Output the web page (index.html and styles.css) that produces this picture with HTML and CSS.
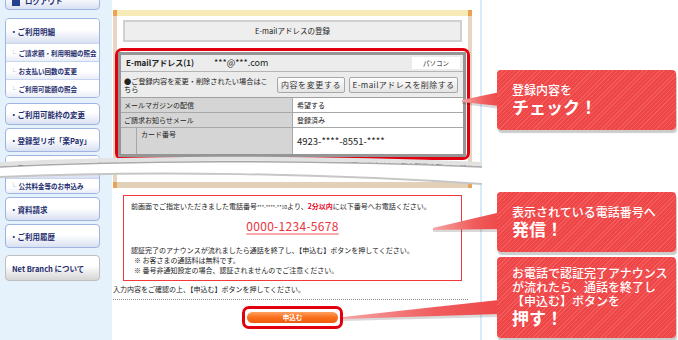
FILE: index.html
```html
<!DOCTYPE html>
<html lang="ja">
<head>
  <meta charset="UTF-8">
  <title>E-mailアドレスの登録</title>
  <link rel="stylesheet" href="styles.css">
</head>
<body>
  <div class="side">
    <div class="card card-top"><span class="sq"></span>ログアウト</div>
    <div class="card card-group first">
      <div class="card-head">・ご利用明細</div>
      <div class="sub"><span class="el">└</span>ご請求額・利用明細の照会</div>
      <div class="sub"><span class="el">└</span>お支払い回数の変更</div>
      <div class="sub"><span class="el">└</span>ご利用可能額の照会</div>
    </div>
    <div class="card card-short">・ご利用可能枠の変更</div>
    <div class="card">・登録型リボ「楽Pay」</div>
    <div class="card card-group">
      <div class="card-head low">・ネットキャッシング</div>
      <div class="sub low"><span class="el">└</span>公共料金等のお申込み</div>
    </div>
    <div class="card">・資料請求</div>
    <div class="card">・ご利用履歴</div>
    <div class="card card-gray">Net Branch について</div>
  </div>

  <div class="main">
    <div class="frame">
      <div class="frame-edge"></div>
      <div class="frame-body">
        <div class="title">E-mailアドレスの登録</div>
        <div class="mark">
          <div class="reg">
            <div class="r1">
              <b>E-mailアドレス(1)</b>
              <span class="addr">***@***.com</span>
              <span class="tag">パソコン</span>
            </div>
            <div class="r2">
              <p class="note">●ご登録内容を変更・削除されたい場合はこちら</p>
              <button class="btn">内容を変更する</button>
              <button class="btn wide">E-mailアドレスを削除する</button>
            </div>
            <div class="r3">
              <div class="lab">メールマガジンの配信</div>
              <div class="val">希望する</div>
            </div>
            <div class="r3">
              <div class="lab">ご請求お知らせメール</div>
              <div class="val">登録済み</div>
            </div>
            <div class="r5">
              <div class="ind"></div>
              <div class="lab2">カード番号</div>
              <div class="val card-no">4923-****-8551-****</div>
            </div>
          </div>
        </div>
        <p class="cut">※ご請求お知らせメールの送信先のため、※ご登録のE-mailアドレスは削除できません。お手数ですが、「ご請求お知らせメール」の設定を変更してください。</p>
      </div>
      <div class="frame-edge bottom"></div>
    </div>

    <div class="call">
      <p>前画面でご指定いただきました電話番号<span class="mask">***-****-**10</span>より、<span class="hot">2分以内</span>に以下番号へお電話ください。</p>
      <div class="tel">0000-1234-5678</div>
      <div class="notes">
        <p>認証完了のアナウンスが流れましたら通話を終了し、【申込む】ボタンを押してください。</p>
        <p class="in">※ お客さまの通話料は無料です。</p>
        <p class="in">※ 番号非通知設定の場合、認証されませんのでご注意ください。</p>
      </div>
    </div>
    <p class="confirm">入力内容をご確認の上、【申込む】ボタンを押してください。</p>
    <div class="dots"></div>
    <div class="go"><span>申込む</span></div>
  </div>

  <div class="right">
    <div class="bubble b1">
      <div class="s">登録内容を</div>
      <div class="b">チェック！</div>
    </div>
    <div class="bubble b2">
      <div class="s">表示されている電話番号へ</div>
      <div class="b">発信！</div>
    </div>
    <div class="bubble b3">
      <div class="s">お電話で認証完了アナウンス</div>
      <div class="s">が流れたら、通話を終了し</div>
      <div class="s">【申込む】ボタンを</div>
      <div class="b">押す！</div>
    </div>
  </div>

  <!-- torn paper band and callout tails -->
  <svg class="overlay" width="678" height="340" viewBox="0 0 678 340">
    <defs>
      <linearGradient id="tail" x1="0" x2="1" y1="0" y2="0">
        <stop offset="0" stop-color="#f6a3a3"/>
        <stop offset="0.6" stop-color="#f05c5c"/>
        <stop offset="1" stop-color="#ee4749"/>
      </linearGradient>
    </defs>
    <path d="M0,164 C120,158 300,156 482,164" fill="none" stroke="#e2e2e2" stroke-width="4"/>
    <path d="M0,167 C120,161 300,159 482,167 L482,184 C330,174 150,170 0,177 Z" fill="#fff"/>
    <path d="M0,167 C120,161 300,159 482,167" fill="none" stroke="#a9a9a9" stroke-width="1.5"/>
    <path d="M0,177 C150,170 330,174 482,184" fill="none" stroke="#c6c6c6" stroke-width="2"/>

    <polygon points="462,102 500,95 500,109 462,104" fill="#000" opacity="0.15"/>
    <polygon points="462,100 500,92 500,106 462,102" fill="url(#tail)"/>
    <polygon points="433,230 501,215 501,232 433,232" fill="#000" opacity="0.15"/>
    <polygon points="433,228 501,212 501,229 433,230" fill="url(#tail)"/>
    <polygon points="343,319 499,303 499,317 343,321" fill="#000" opacity="0.15"/>
    <polygon points="343,317 499,300 499,314 343,319" fill="url(#tail)"/>
  </svg>
</body>
</html>
```

FILE: styles.css
```css
body {
  margin: 0;
  width: 678px;
  height: 340px;
  overflow: hidden;
  display: flex;
  position: relative;
  background: #fff;
  color: #333;
  font-family: "Noto Sans CJK JP", "Noto Sans", sans-serif;
}

p {
  margin: 0;
}

/* left menu */
.side {
  width: 112px;
  flex-shrink: 0;
  background: #e6f2fb;
  padding-left: 5px;
  box-sizing: border-box;
  display: flex;
  flex-direction: column;
}

.card {
  width: 95px;
  height: 24px;
  box-sizing: border-box;
  border: 1px solid #9fb4e0;
  border-radius: 4px;
  background: linear-gradient(#fff 45%, #d9e0f1);
  color: #1e2d6e;
  font-size: 7.5px;
  font-weight: 700;
  display: flex;
  align-items: center;
  padding-left: 4px;
  margin-top: 3px;
  white-space: nowrap;
  overflow: hidden;
  flex-shrink: 0;
}

.card-top {
  margin-top: -14px;
  align-items: flex-end;
  padding: 0 0 3px 6px;
}

.sq {
  width: 8px;
  height: 8px;
  background: #23408e;
  margin-right: 5px;
}

.card-group {
  display: block;
  height: auto;
  padding: 0;
  background: #fff;
}

.card-group.first {
  margin-top: 8px;
}

.card-head {
  height: 24px;
  display: flex;
  align-items: center;
  padding-left: 4px;
  background: linear-gradient(#fff 45%, #d9e0f1);
}

.card-head.low {
  height: 22px;
}

.sub {
  height: 18px;
  box-sizing: border-box;
  border-top: 1px solid #c9d4ee;
  font-size: 6.5px;
  display: flex;
  align-items: center;
  padding-left: 4px;
  background: linear-gradient(#fff 55%, #e9edf8);
}

.sub.low {
  height: 15px;
}

.el {
  color: #8a9acb;
  font-weight: 400;
  margin-right: 2px;
}

.card-short {
  margin-top: 5px;
  height: 22px;
}

.card-gray {
  margin-top: 7px;
  height: 26px;
  border-color: #bfbfbf;
  background: linear-gradient(#fff 40%, #d5d5d5);
  padding-left: 6px;
}

/* main column */
.main {
  width: 368px;
  flex-shrink: 0;
  padding: 10px 0 0 1px;
  box-sizing: border-box;
  font-size: 7px;
  line-height: 10px;
  color: #222;
}

.frame {
  width: 359px;
  background: #e5d5c1;
  padding: 0 4px;
  box-sizing: border-box;
}

.frame-edge {
  height: 6px;
  margin: 0 -4px;
  background: linear-gradient(to right, #eba253 4px, #f6ebb7 4px, #f6ebb7 calc(100% - 4px), #eba253 calc(100% - 4px));
}

.frame-edge.bottom {
  background: linear-gradient(to right, #eba253 4px, #e3d0b8 4px, #e3d0b8 calc(100% - 4px), #eba253 calc(100% - 4px));
}

.frame-body {
  background: #fff;
  padding: 4px 0 12px;
}

.title {
  height: 22px;
  margin: 0 6px;
  box-sizing: border-box;
  border: 2px solid #d0d0d0;
  background: #eee;
  font-size: 7.5px;
  display: flex;
  align-items: center;
  justify-content: center;
}

.mark {
  margin: 6px -2px 0;
  height: 112px;
  box-sizing: border-box;
  border: 3px solid #e1000f;
  border-radius: 7px;
  padding: 1px 1px 0 0;
}

.reg {
  border: 3px solid #959595;
  background: #ececec;
}

.r1 {
  height: 16px;
  display: flex;
  align-items: center;
  padding-left: 5px;
  border-bottom: 1px solid #b4b4b4;
}

.r1 b {
  font-size: 8px;
}

.addr {
  font-size: 9px;
  margin-left: 20px;
}

.tag {
  margin: 0 3px 0 auto;
  width: 48px;
  height: 12px;
  background: #fff;
  font-size: 6.5px;
  display: flex;
  align-items: center;
  justify-content: center;
}

.r2 {
  height: 25px;
  display: flex;
  align-items: center;
  padding-left: 3px;
  border-bottom: 1px solid #a0a0a0;
}

.note {
  width: 147px;
  font-size: 7.2px;
  line-height: 8px;
}

.btn {
  width: 68px;
  height: 16px;
  margin-left: 6px;
  padding: 0;
  border: 1px solid #a8a8a8;
  border-radius: 2px;
  background: linear-gradient(#fdfdfd, #e4e4e4);
  font-family: inherit;
  font-size: 8px;
  letter-spacing: 0.6px;
  color: #333;
  white-space: nowrap;
}

.btn.wide {
  width: 109px;
  margin-left: 4px;
  letter-spacing: 0.4px;
}

.r3 {
  height: 14px;
  display: flex;
  border-bottom: 1px solid #a8a8a8;
}

.lab {
  width: 172px;
  box-sizing: border-box;
  background: #d5d5d5;
  border-right: 1px solid #a8a8a8;
  padding-left: 3px;
  display: flex;
  align-items: center;
}

.val {
  flex: 1;
  background: #fff;
  padding-left: 4px;
  display: flex;
  align-items: center;
}

.r5 {
  height: 26px;
  display: flex;
}

.ind {
  width: 16px;
  box-sizing: border-box;
  background: #d5d5d5;
  border-right: 1px solid #a8a8a8;
}

.lab2 {
  width: 156px;
  box-sizing: border-box;
  background: #d5d5d5;
  border-right: 1px solid #a8a8a8;
  padding: 1px 0 0 4px;
}

.card-no {
  font-size: 9.5px;
}

.cut {
  white-space: nowrap;
  overflow: hidden;
  padding-left: 4px;
}

/* phone call box */
.call {
  width: 339px;
  margin: 7px 0 0 10px;
  box-sizing: border-box;
  border: 1px solid #f23a3a;
  padding: 5px 7px;
}

.call p {
  white-space: nowrap;
}

.mask {
  font-size: 5px;
}

.hot {
  color: #e8001c;
  font-weight: 700;
}

.tel {
  margin-top: 7px;
  text-align: center;
  font-size: 12px;
  line-height: 14px;
  letter-spacing: 0.3px;
  color: #ea3440;
  text-decoration: underline;
  text-decoration-color: #f7a9ac;
  text-decoration-thickness: 2px;
  text-underline-offset: 2px;
}

.notes {
  margin-top: 12px;
}

.notes .in {
  padding-left: 3px;
}

.confirm {
  margin-top: 3px;
}

.dots {
  width: 355px;
  margin-top: 5px;
  border-top: 1px dotted #8a8a8a;
}

.go {
  width: 101px;
  height: 23px;
  margin: 6px 0 0 129px;
  box-sizing: border-box;
  border: 3px solid #e1000f;
  border-radius: 7px;
  display: flex;
  align-items: center;
  justify-content: center;
}

.go span {
  width: 91px;
  height: 11px;
  border-radius: 6px;
  background: linear-gradient(#ffa060, #f8701c 50%, #ee5a0c);
  color: #fff;
  font-size: 6.5px;
  font-weight: 700;
  line-height: 11px;
  text-align: center;
}

/* callouts */
.right {
  flex: 1;
  border-left: 2px solid #d8ebf8;
  padding-left: 15px;
}

.bubble {
  position: relative;
  z-index: 2;
  width: 179px;
  box-sizing: border-box;
  border-radius: 4px;
  background: repeating-linear-gradient(-45deg, #ee4547 0 2px, #f35b5d 2px 3px);
  box-shadow: 1px 3px 1px rgba(0, 0, 0, 0.2);
  color: #fff;
  padding-left: 15px;
  white-space: nowrap;
}

.bubble .s {
  font-size: 12px;
  line-height: 15px;
  font-weight: 500;
}

.bubble .b {
  font-size: 17px;
  line-height: 20px;
  font-weight: 700;
}

.b1 {
  margin-top: 70px;
  height: 60px;
  padding-top: 12px;
}

.b2 {
  margin-top: 62px;
  height: 60px;
  padding-top: 12px;
}

.b3 {
  margin-top: 5px;
  height: 81px;
  padding-top: 9px;
}

.b3 .s {
  line-height: 14px;
}

.overlay {
  position: absolute;
  left: 0;
  top: 0;
  z-index: 1;
  pointer-events: none;
}
```
